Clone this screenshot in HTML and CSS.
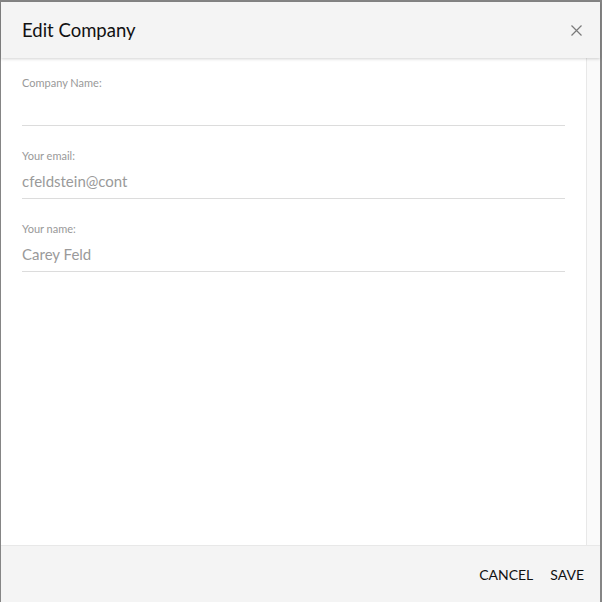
FILE: index.html
```html
<!DOCTYPE html>
<html lang="en">
<head>
    <meta charset="UTF-8">
    <meta name="viewport" content="width=device-width, initial-scale=1.0">
    <title>Edit Company</title>
    <link rel="stylesheet" href="styles.css">
</head>
<body>
<div class="modal">
    <div class="modal-header">
        <h2>Edit Company</h2>
        <span class="close">
            <svg width="11" height="11" viewBox="0 0 11 11">
                <path d="M0.5 0.5 L10.5 10.5 M10.5 0.5 L0.5 10.5" stroke="#7a7a7a" stroke-width="1.2" fill="none"/>
            </svg>
        </span>
    </div>
    <div class="modal-body">
        <form class="fields">
            <div class="field">
                <label>Company Name:</label>
                <div class="input"></div>
            </div>
            <div class="field">
                <label>Your email:</label>
                <div class="input">cfeldstein@cont</div>
            </div>
            <div class="field">
                <label>Your name:</label>
                <div class="input">Carey Feld</div>
            </div>
        </form>
        <div class="scrollbar"></div>
    </div>
    <div class="modal-footer">
        <button class="btn">CANCEL</button>
        <button class="btn">SAVE</button>
    </div>
</div>
</body>
</html>
```

FILE: styles.css
```css
body {
    font-family: Lato, "Open Sans", sans-serif;
    background-color: #858585;
    margin: 0;
    padding: 0;
}

.modal {
    margin: 2px 2px 0 1px;
    height: 600px;
    background-color: #fff;
    display: flex;
    flex-direction: column;
}

.modal-header {
    height: 56px;
    background-color: #f4f4f4;
    display: flex;
    align-items: center;
    justify-content: space-between;
    padding: 0 18px 0 21px;
    box-shadow: 0 1px 3px rgba(0, 0, 0, 0.18);
    position: relative;
    z-index: 1;
}

.modal-header h2 {
    margin: 0;
    font-size: 18.5px;
    font-weight: normal;
    color: #111;
}

.close {
    display: flex;
    cursor: pointer;
}

.modal-body {
    flex: 1;
    display: flex;
}

.fields {
    flex: 1;
    padding: 18px 21px 0 21px;
}

.field {
    margin-bottom: 23px;
}

.field label {
    display: block;
    font-size: 11px;
    line-height: 14px;
    color: #999;
}

.input {
    height: 35px;
    line-height: 37px;
    font-size: 15px;
    color: #9a9a9a;
    border-bottom: 1px solid #dcdcdc;
}

.scrollbar {
    width: 13px;
    background-color: #fafafa;
    border-left: 1px solid #e8e8e8;
}

.modal-footer {
    height: 56px;
    background-color: #f4f4f4;
    border-top: 1px solid #e8e8e8;
    display: flex;
    align-items: center;
    justify-content: flex-end;
    gap: 17px;
    padding: 0 16px 0 0;
}

.btn {
    border: none;
    background: none;
    padding: 0;
    font-family: inherit;
    font-size: 14px;
    color: #111;
    cursor: pointer;
}
```
